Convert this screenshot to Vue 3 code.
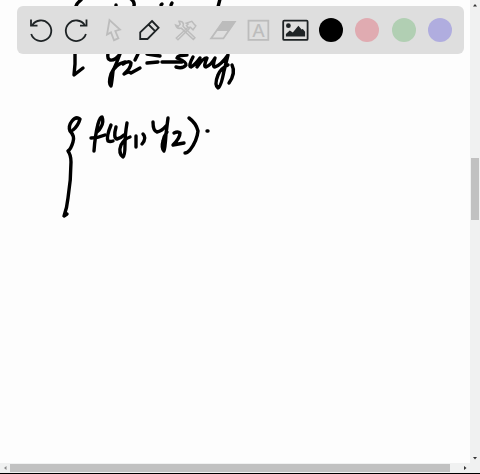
<script setup>
import { ref } from 'vue'

const tool = ref('pen')
const color = ref('#000000')

const swatches = [
  { name: 'Black', value: '#000000' },
  { name: 'Pink', value: '#e0abb1' },
  { name: 'Green', value: '#b1cfb3' },
  { name: 'Lavender', value: '#b0addf' }
]

// Pen strokes on the whiteboard, in canvas coordinates
const strokes = [
  // first line, mostly hidden by the toolbar
  'M76 6 Q77 3 81 0', 'M116 5 V6', 'M131 -1 Q135 2 134 6', 'M161 5 L162 4', 'M171 5 L172 3', 'M220 -1 L218 7',
  // second line
  'M75 52 L75 64 L74 75 L83 68',
  'M108 53 Q107 59 110 60 Q115 61 120 54 Q117 62 113 71 Q112 81 111 86 Q108 83 111 74 Q115 64 125 62',
  'M123 64 Q129 60 131 63 Q131 68 124 74 Q129 71 131 73 L140 68',
  'M135 60 L138 54',
  'M147 54 L160 56', 'M147 63 L158 62', 'M162 62 H182',
  'M187 55 Q178 55 177 58 Q187 62 186 65 Q183 69 176 67',
  'M193 57 Q188 66 191 67 Q195 65 200 58 L197 67 Q204 57 207 58 Q203 67 206 67 Q211 65 215 58 Q212 67 215 67 Q221 65 228 55 L224 71 Q221 87 218 88 Q214 85 218 75 Q221 68 228 65',
  'M232 65 Q236 73 229 83',
  // open brace
  'M73 130 Q78 126 80 119 Q76 116 72 121 Q68 126 70 131 Q75 136 73 142 Q71 149 68 151 Q71 155 71 162 Q71 180 68 198 Q67 208 64 216 L67 214',
  // f(y1, Y2).
  'M94 151 Q95 136 98 124 Q100 117 102 117 Q104 122 101 127 Q99 131 97 132', 'M91 138 Q98 138 105 135',
  'M111 125 Q106 137 108 141 Q110 142 113 141',
  'M116 127 Q113 138 117 139 Q121 138 124 135', 'M127 123 Q125 135 125 144 Q125 156 123 157 Q118 153 121 145 Q124 139 130 137',
  'M136 136 V147', 'M143 134 Q147 138 142 144',
  'M153 122 Q153 131 157 132 Q162 131 166 126', 'M168 118 L166 134 Q165 150 164 151 Q161 148 163 141 Q164 136 167 132',
  'M174 133 Q178 131 180 133 Q180 138 173 145 L184 143',
  'M189 118 Q196 123 198 131 Q197 141 190 150 Q187 153 185 153',
  'M207 131 H208'
]
</script>

<template>
  <main class="board">
    <section class="paper">
      <svg class="ink" role="img" aria-label="Handwritten equations">
        <path v-for="(d, i) in strokes" :key="i" :d="d" />
      </svg>

      <div class="toolbar" role="toolbar" aria-label="Drawing tools">
        <button type="button" class="item" aria-label="Undo">
          <svg viewBox="0 0 26 26" class="icon">
            <path d="M4.2 17A10.3 10.3 0 1 0 5.3 8.2" /><path d="M4 2.5V8.7H10.5" />
          </svg>
        </button>
        <button type="button" class="item" aria-label="Redo">
          <svg viewBox="0 0 26 26" class="icon">
            <path d="M22.9 17A10.3 10.3 0 1 1 21.8 8.2" /><path d="M23.5 2.5V8.7H17" />
          </svg>
        </button>
        <button type="button" class="item dim" aria-label="Select" @click="tool = 'select'">
          <svg viewBox="0 0 26 26" class="icon">
            <path d="M9.5 3L7 17.6L11 15.4L14 23.2L18.4 21.3L15.3 14L20 12.6Z" />
          </svg>
        </button>
        <button type="button" class="item" aria-label="Pen" :aria-pressed="tool === 'pen'" @click="tool = 'pen'">
          <svg viewBox="0 0 26 26" class="icon">
            <path d="M16 4L22.6 10.8L11.5 22H4.2V15.3ZM12.5 7.5L19.1 14.2" />
          </svg>
        </button>
        <button type="button" class="item dim" aria-label="Tools" @click="tool = 'tools'">
          <svg viewBox="0 0 26 26" class="icon thin">
            <path d="M7 4.3Q10.6 4 11.4 7L11 9.3L22.9 20.7L21.3 22.4L9.2 11.1Q5 12.3 3.6 8L6.5 9.2L8.2 7.2Z" />
            <path d="M14.2 6.2L19.8 4.3L22 7L23.8 8.9L21 12.8L18.4 10.2L16 10.4L14.5 8.5L16 7.2ZM15.8 10.5L4.3 21L6 22.7L17.6 11.3" />
          </svg>
        </button>
        <button type="button" class="item dim" aria-label="Eraser" @click="tool = 'eraser'">
          <svg viewBox="0 0 26 26" class="icon">
            <path class="solid" d="M13.8 4.3H26.3L20 14H7.2Z" />
            <path d="M13.8 4.8H25.8L14.4 21.4H2.1Z" />
          </svg>
        </button>
        <button type="button" class="item dim" aria-label="Text" @click="tool = 'text'">
          <svg viewBox="0 0 26 26" class="icon">
            <rect x="3.5" y="3.7" width="19.8" height="19.2" />
            <text class="letter" x="13.4" y="19.6" text-anchor="middle">A</text>
          </svg>
        </button>
        <button type="button" class="item" aria-label="Insert image">
          <svg viewBox="0 0 26 26" class="icon">
            <rect x="1.2" y="3.7" width="24.4" height="19.2" rx="1" />
            <circle class="solid" cx="6.4" cy="8.7" r="2.4" />
            <path class="solid" d="M3.9 19.4V17L7.8 13.6L10.8 15.5L16.4 8.7L19.6 12.4L20.8 12L23.1 14.7V19.4Z" />
          </svg>
        </button>
        <button
          v-for="s in swatches"
          :key="s.value"
          type="button"
          class="item"
          :aria-label="s.name"
          :aria-pressed="color === s.value"
          @click="color = s.value"
        >
          <span class="swatch" :style="{ background: s.value }"></span>
        </button>
      </div>
    </section>

    <div class="scroll vertical">
      <button type="button" class="arrow" aria-label="Scroll up">
        <svg viewBox="0 0 10 10"><path d="M3 6.5L5 4L7 6.5Z" /></svg>
      </button>
      <div class="track"><div class="thumb"></div></div>
      <button type="button" class="arrow" aria-label="Scroll down">
        <svg viewBox="0 0 10 10"><path d="M3 4L5 6.5L7 4Z" /></svg>
      </button>
    </div>
    <div class="scroll horizontal">
      <button type="button" class="arrow faint" aria-label="Scroll left">
        <svg viewBox="0 0 10 10"><path d="M6.5 3L4 5L6.5 7Z" /></svg>
      </button>
      <div class="track"><div class="thumb"></div></div>
      <button type="button" class="arrow" aria-label="Scroll right">
        <svg viewBox="0 0 10 10"><path d="M4 3L6.5 5L4 7Z" /></svg>
      </button>
    </div>
  </main>
</template>

<style>
body {
  margin: 0;
  background: #fdfdfd;
}
</style>

<style scoped>
.board {
  display: grid;
  grid-template-columns: 1fr 10px;
  grid-template-rows: 1fr 10px;
  box-sizing: border-box;
  height: 100vh;
  border-bottom: 1px solid #000;
  background: #f0f1f1;
  font-family: "Liberation Sans", Arial, sans-serif;
}
.paper {
  position: relative;
  overflow: hidden;
  background: #fdfdfd;
}
.ink {
  position: absolute;
  inset: 0;
  width: 100%;
  height: 100%;
  fill: none;
  stroke: #000;
  stroke-width: 3.4;
  stroke-linecap: round;
  stroke-linejoin: round;
}
.toolbar {
  position: absolute;
  top: 6px;
  left: 17px;
  right: 6px;
  height: 48px;
  box-sizing: border-box;
  padding: 0 11px 0 10px;
  display: flex;
  align-items: center;
  justify-content: space-between;
  background: #dedede;
  border-radius: 6px;
}
.item {
  display: grid;
  place-items: center;
  width: 26px;
  height: 26px;
  padding: 0;
  border: 0;
  background: none;
  color: #1e2325;
  cursor: pointer;
}
.dim {
  color: #bcbcbc;
}
.icon {
  display: block;
  width: 26px;
  height: 26px;
  overflow: visible;
  fill: none;
  stroke: currentColor;
  stroke-width: 1.8;
}
.thin {
  stroke-width: 1.5;
}
.solid {
  fill: currentColor;
  stroke: none;
}
.letter {
  fill: currentColor;
  stroke-width: 0.2;
  font-family: "Liberation Sans", Arial, sans-serif;
  font-size: 18px;
}
.swatch {
  width: 24px;
  height: 24px;
  border-radius: 50%;
}
.scroll {
  display: flex;
}
.vertical {
  flex-direction: column;
}
.arrow {
  flex: none;
  width: 10px;
  height: 10px;
  padding: 0;
  border: 0;
  background: none;
}
.arrow svg {
  display: block;
  width: 10px;
  height: 10px;
  fill: #333;
}
.faint svg {
  fill: #888;
}
.track {
  flex: 1;
  display: flex;
}
.thumb {
  background: #c1c1c1;
}
.vertical .track {
  flex-direction: column;
  padding: 0 1px;
}
.vertical .track::before {
  content: "";
  flex: 148;
}
.vertical .thumb {
  flex: 62;
}
.vertical .track::after {
  content: "";
  flex: 233;
}
.horizontal .track {
  padding: 1px 0;
}
.horizontal .thumb {
  flex: 440;
}
.horizontal .track::after {
  content: "";
  flex: 10;
}
</style>
